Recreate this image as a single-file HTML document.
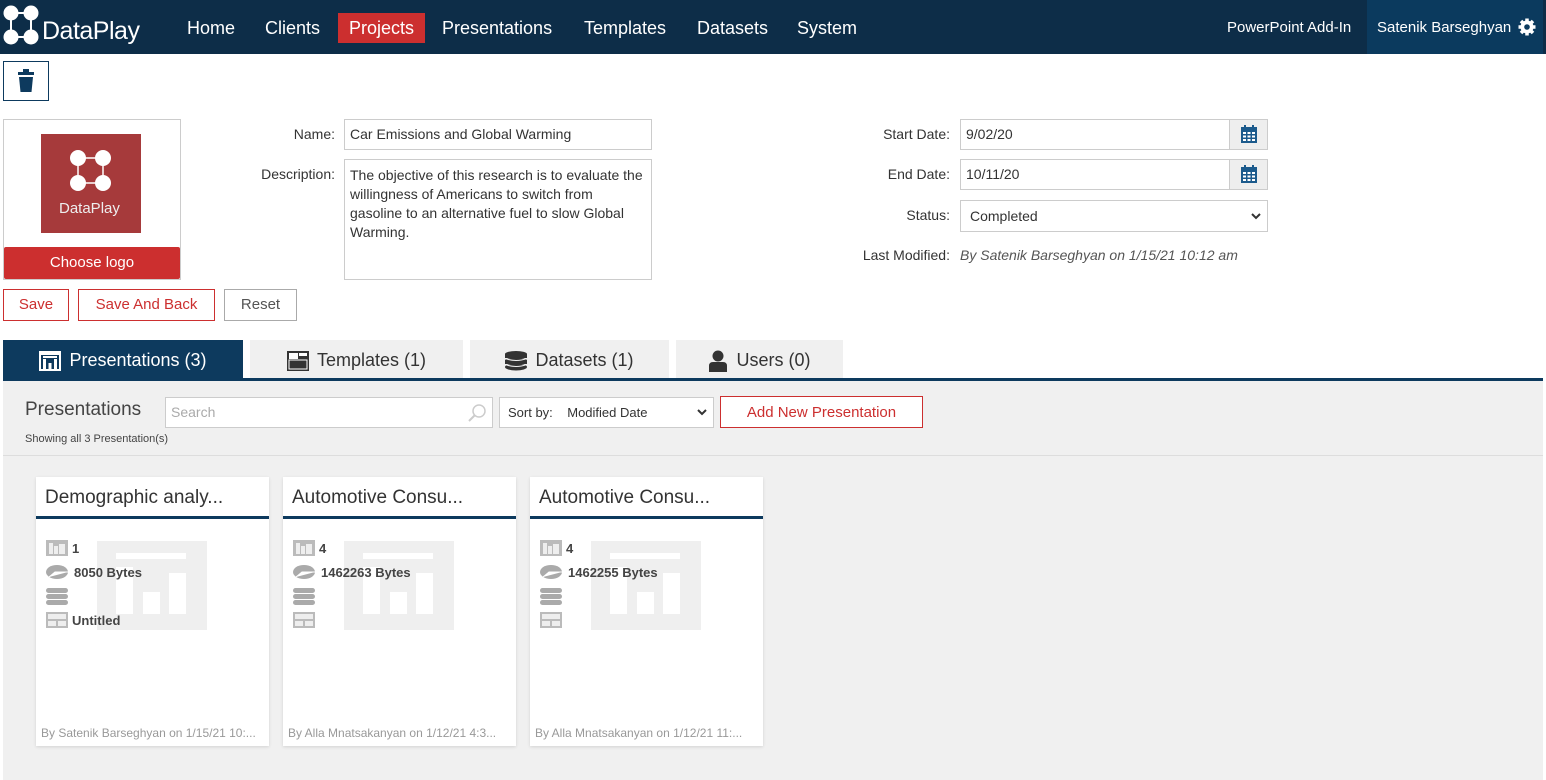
<!DOCTYPE html>
<html><head><meta charset="utf-8"><style>
*{box-sizing:border-box;margin:0;padding:0}
body{width:1546px;height:780px;overflow:hidden;background:#fff;font-family:"Liberation Sans",Arial,sans-serif;color:#333;position:relative}
.a{position:absolute;white-space:nowrap}
.nav{left:0;top:0;width:1546px;height:54px;background:#0d2d48}
.nl{color:#fff;font-size:18px;top:18px}
.lbl{font-size:14px;color:#333;text-align:right}
.inp{border:1px solid #ccc;background:#fff;font-size:14px;color:#333;padding:0 5px}
.btn{border:1px solid #cc2f2f;color:#cc2f2f;font-size:15px;text-align:center;line-height:30px;background:#fff}
.tab{top:340px;height:38px;background:#f0f0f0;font-size:18px;color:#333;display:flex;align-items:center;justify-content:center;gap:8px;padding-top:3px}
.card{top:477px;width:233px;height:269px;background:#fff;box-shadow:0 1px 3px rgba(0,0,0,.12)}
.ct{left:9px;top:10px;font-size:19px;color:#333}
.cl{left:0;top:39px;width:233px;height:3px;background:#0d3a5e}
.ci{font-size:13px;font-weight:bold;color:#444}
.cf{left:5px;top:249px;font-size:12px;color:#999}
</style></head><body>
<div class="a nav"></div>
<svg class="a" style="left:2px;top:4px" width="46" height="42" viewBox="0 0 46 42"><g fill="#fff"><circle cx="9" cy="9" r="7.5"/><circle cx="29" cy="9" r="7.5"/><circle cx="9" cy="33" r="7.5"/><circle cx="29" cy="33" r="7.5"/></g><g stroke="#fff" stroke-width="2"><line x1="9" y1="9" x2="29" y2="9"/><line x1="9" y1="9" x2="9" y2="33"/><line x1="29" y1="9" x2="29" y2="33"/><line x1="9" y1="33" x2="29" y2="33"/></g></svg>
<div class="a" style="left:42px;top:17px;color:#fff;font-size:25px;letter-spacing:-0.5px">DataPlay</div>
<div class="a nl" style="left:187px">Home</div>
<div class="a nl" style="left:265px">Clients</div>
<div class="a" style="left:338px;top:13px;width:87px;height:30px;background:#cc2f2f"></div>
<div class="a nl" style="left:349px">Projects</div>
<div class="a nl" style="left:442px">Presentations</div>
<div class="a nl" style="left:584px">Templates</div>
<div class="a nl" style="left:697px">Datasets</div>
<div class="a nl" style="left:797px">System</div>
<div class="a" style="left:1227px;top:19px;color:#fff;font-size:15px">PowerPoint Add-In</div>
<div class="a" style="left:1367px;top:0;width:176px;height:54px;background:#0b3a5e"></div>
<div class="a" style="left:1377px;top:19px;color:#fff;font-size:15px">Satenik Barseghyan</div>
<svg class="a" style="left:1518px;top:18px" width="18" height="18" viewBox="0 0 18 18"><g fill="#fff"><circle cx="9" cy="9" r="6.5"/><g stroke="#fff" stroke-width="3.5"><line x1="9" y1="0.5" x2="9" y2="17.5"/><line x1="0.5" y1="9" x2="17.5" y2="9"/><line x1="3" y1="3" x2="15" y2="15"/><line x1="15" y1="3" x2="3" y2="15"/></g></g><circle cx="9" cy="9" r="2.8" fill="#0b3a5e"/></svg>

<div class="a" style="left:3px;top:61px;width:46px;height:40px;border:1px solid #0d3a5e"></div>
<svg class="a" style="left:17px;top:69px" width="18" height="24" viewBox="0 0 18 24"><rect x="6" y="0" width="6" height="3" fill="#0d3a5e"/><rect x="1" y="3" width="16" height="3" fill="#0d3a5e"/><path d="M2 8h14l-1.5 15h-11z" fill="#0d3a5e"/></svg>

<div class="a" style="left:3px;top:119px;width:178px;height:161px;border:1px solid #ccc"></div>
<div class="a" style="left:41px;top:134px;width:100px;height:99px;background:#a63a3b"></div>
<svg class="a" style="left:68px;top:148px" width="46" height="46" viewBox="0 0 46 46"><g fill="#fff"><circle cx="10" cy="10" r="8"/><circle cx="35" cy="10" r="8"/><circle cx="10" cy="35" r="8"/><circle cx="35" cy="35" r="8"/></g><g stroke="#fff" stroke-width="1.5"><rect x="10" y="10" width="25" height="25" fill="none"/></g></svg>
<div class="a" style="left:59px;top:200px;color:#eee;font-size:15px">DataPlay</div>
<div class="a" style="left:4px;top:247px;width:176px;height:32px;background:#cc2f2f;color:#fff;font-size:15px;text-align:center;line-height:32px;border-radius:2px">Choose logo</div>

<div class="a lbl" style="left:200px;width:135px;top:126px">Name:</div>
<div class="a inp" style="left:344px;top:119px;width:308px;height:31px;line-height:29px">Car Emissions and Global Warming</div>
<div class="a lbl" style="left:200px;width:135px;top:166px">Description:</div>
<div class="a inp" style="left:344px;top:159px;width:308px;height:121px;padding-top:6px;line-height:19px;white-space:normal">The objective of this research is to evaluate the willingness of Americans to switch from gasoline to an alternative fuel to slow Global Warming.</div>

<div class="a lbl" style="left:800px;width:150px;top:126px">Start Date:</div>
<div class="a inp" style="left:960px;top:119px;width:308px;height:31px;line-height:29px">9/02/20</div>
<div class="a lbl" style="left:800px;width:150px;top:166px">End Date:</div>
<div class="a inp" style="left:960px;top:159px;width:308px;height:31px;line-height:29px">10/11/20</div>
<div class="a" style="left:1229px;top:120px;width:38px;height:29px;background:#eee;border-left:1px solid #ccc"></div>
<div class="a" style="left:1229px;top:160px;width:38px;height:29px;background:#eee;border-left:1px solid #ccc"></div>
<svg class="a" style="left:1241px;top:125px" width="16" height="18" viewBox="0 0 16 18"><rect x="0" y="2" width="16" height="16" fill="#1b5a8c"/><rect x="3" y="0" width="2" height="4" fill="#1b5a8c"/><rect x="11" y="0" width="2" height="4" fill="#1b5a8c"/><g fill="#fff"><rect x="2" y="7" width="3" height="2"/><rect x="6.5" y="7" width="3" height="2"/><rect x="11" y="7" width="3" height="2"/><rect x="2" y="10.5" width="3" height="2"/><rect x="6.5" y="10.5" width="3" height="2"/><rect x="11" y="10.5" width="3" height="2"/><rect x="2" y="14" width="3" height="2"/><rect x="6.5" y="14" width="3" height="2"/><rect x="11" y="14" width="3" height="2"/></g></svg>
<svg class="a" style="left:1241px;top:165px" width="16" height="18" viewBox="0 0 16 18"><rect x="0" y="2" width="16" height="16" fill="#1b5a8c"/><rect x="3" y="0" width="2" height="4" fill="#1b5a8c"/><rect x="11" y="0" width="2" height="4" fill="#1b5a8c"/><g fill="#fff"><rect x="2" y="7" width="3" height="2"/><rect x="6.5" y="7" width="3" height="2"/><rect x="11" y="7" width="3" height="2"/><rect x="2" y="10.5" width="3" height="2"/><rect x="6.5" y="10.5" width="3" height="2"/><rect x="11" y="10.5" width="3" height="2"/><rect x="2" y="14" width="3" height="2"/><rect x="6.5" y="14" width="3" height="2"/><rect x="11" y="14" width="3" height="2"/></g></svg>
<div class="a lbl" style="left:800px;width:150px;top:207px">Status:</div>
<div class="a inp" style="left:960px;top:200px;width:308px;height:32px;line-height:30px;padding-left:9px">Completed</div>
<svg class="a" style="left:1251px;top:212px" width="10" height="8" viewBox="0 0 10 8"><path d="M1 2l4 4 4-4" stroke="#333" stroke-width="2" fill="none"/></svg>
<div class="a lbl" style="left:800px;width:150px;top:247px">Last Modified:</div>
<div class="a" style="left:960px;top:247px;font-size:14px;font-style:italic;color:#555">By Satenik Barseghyan on 1/15/21 10:12 am</div>

<div class="a btn" style="left:3px;top:289px;width:66px;height:32px">Save</div>
<div class="a btn" style="left:78px;top:289px;width:137px;height:32px">Save And Back</div>
<div class="a btn" style="left:224px;top:289px;width:73px;height:32px;border-color:#aaa;color:#555">Reset</div>

<div class="a tab" style="left:3px;width:240px;background:#0d3a5e;color:#fff"><svg width="22" height="20" viewBox="0 0 22 20"><rect x="0" y="0" width="22" height="20" fill="#fff"/><rect x="2" y="4" width="18" height="14" fill="#0d3a5e"/><rect x="4" y="8" width="3" height="10" fill="#fff"/><rect x="9.5" y="12" width="3" height="6" fill="#fff"/><rect x="15" y="8" width="3" height="10" fill="#fff"/><rect x="4" y="5" width="14" height="2" fill="#fff"/></svg>Presentations (3)</div>
<div class="a tab" style="left:250px;width:213px"><svg width="22" height="20" viewBox="0 0 22 20"><rect x="0" y="0" width="22" height="20" fill="#333"/><rect x="2" y="2" width="9" height="6" fill="#fff"/><rect x="12" y="2" width="8" height="3" fill="#fff"/><rect x="2" y="9" width="18" height="9" fill="#333" stroke="#fff" stroke-width="1"/></svg>Templates (1)</div>
<div class="a tab" style="left:470px;width:199px"><svg width="22" height="20" viewBox="0 0 22 20"><g fill="#333"><ellipse cx="11" cy="3" rx="11" ry="3"/><rect x="0" y="3" width="22" height="4"/><ellipse cx="11" cy="9.5" rx="11" ry="3"/><rect x="0" y="9" width="22" height="4"/><ellipse cx="11" cy="16" rx="11" ry="3.5"/></g><g stroke="#f0f0f0" stroke-width="1" fill="none"><path d="M0 7.5q11 4 22 0M0 13.5q11 4 22 0"/></g></svg>Datasets (1)</div>
<div class="a tab" style="left:676px;width:167px"><svg width="20" height="22" viewBox="0 0 20 22"><circle cx="10" cy="6" r="5.5" fill="#333"/><path d="M1 22v-6q0-4 4-4h10q4 0 4 4v6z" fill="#333"/></svg>Users (0)</div>
<div class="a" style="left:3px;top:378px;width:1540px;height:3px;background:#0d3a5e"></div>
<div class="a" style="left:3px;top:381px;width:1540px;height:399px;background:#f0f0f0"></div>
<div class="a" style="left:25px;top:399px;font-size:19px;color:#444">Presentations</div>
<div class="a" style="left:25px;top:433px;font-size:11px;color:#444">Showing all 3 Presentation(s)</div>
<div class="a inp" style="left:165px;top:397px;width:328px;height:31px;line-height:29px;color:#aaa">Search</div>
<svg class="a" style="left:467px;top:403px" width="20" height="20" viewBox="0 0 20 20"><circle cx="12" cy="8" r="6" stroke="#ccc" stroke-width="1.5" fill="none"/><line x1="8" y1="12" x2="2" y2="18" stroke="#ccc" stroke-width="2"/></svg>
<div class="a inp" style="left:499px;top:397px;width:215px;height:31px;line-height:29px;font-size:13px;padding-left:8px">Sort by:&nbsp;&nbsp;&nbsp; Modified Date</div>
<svg class="a" style="left:697px;top:408px" width="10" height="8" viewBox="0 0 10 8"><path d="M1 2l4 4 4-4" stroke="#333" stroke-width="2" fill="none"/></svg>
<div class="a btn" style="left:720px;top:396px;width:203px;height:32px;line-height:31px">Add New Presentation</div>
<div class="a" style="left:3px;top:455px;width:1540px;height:1px;background:#ddd"></div>

<div class="a card" style="left:36px"><div class="a ct">Demographic analy...</div><div class="a cl"></div>
<div class="a" style="left:61px;top:64px;width:110px;height:89px;background:#efefef"></div>
<div class="a" style="left:80px;top:76px;width:70px;height:6px;background:#fff"></div><div class="a" style="left:80px;top:90px;width:17px;height:47px;background:#fff"></div><div class="a" style="left:107px;top:115px;width:17px;height:22px;background:#fff"></div><div class="a" style="left:133px;top:96px;width:17px;height:41px;background:#fff"></div>
<svg class="a" style="left:10px;top:63px" width="22" height="88" viewBox="0 0 22 88"><g fill="#aaa"><rect x="0" y="0" width="22" height="16" fill="#bbb"/><rect x="3" y="3" width="4" height="11" fill="#eee"/><rect x="8" y="6" width="4" height="8" fill="#eee"/><rect x="13" y="4" width="6" height="10" fill="#eee"/><ellipse cx="11" cy="32" rx="11" ry="7"/><path d="M3 37l6-5h13" stroke="#fff" stroke-width="1" fill="#fff"/><rect x="0" y="48" width="22" height="5" rx="2.5"/><rect x="0" y="54" width="22" height="5" rx="2.5"/><rect x="0" y="60" width="22" height="5" rx="2.5"/><rect x="0" y="72" width="22" height="16" fill="#bbb"/><rect x="2" y="74" width="18" height="5" fill="#eee"/><rect x="2" y="81" width="8" height="5" fill="#eee"/><rect x="12" y="81" width="8" height="5" fill="#eee"/></g></svg>
<div class="a ci" style="left:36px;top:64px">1</div><div class="a ci" style="left:38px;top:88px">8050 Bytes</div><div class="a ci" style="left:36px;top:136px">Untitled</div>
<div class="a cf">By Satenik Barseghyan on 1/15/21 10:...</div></div>

<div class="a card" style="left:283px"><div class="a ct">Automotive Consu...</div><div class="a cl"></div>
<div class="a" style="left:61px;top:64px;width:110px;height:89px;background:#efefef"></div>
<div class="a" style="left:80px;top:76px;width:70px;height:6px;background:#fff"></div><div class="a" style="left:80px;top:90px;width:17px;height:47px;background:#fff"></div><div class="a" style="left:107px;top:115px;width:17px;height:22px;background:#fff"></div><div class="a" style="left:133px;top:96px;width:17px;height:41px;background:#fff"></div>
<svg class="a" style="left:10px;top:63px" width="22" height="88" viewBox="0 0 22 88"><g fill="#aaa"><rect x="0" y="0" width="22" height="16" fill="#bbb"/><rect x="3" y="3" width="4" height="11" fill="#eee"/><rect x="8" y="6" width="4" height="8" fill="#eee"/><rect x="13" y="4" width="6" height="10" fill="#eee"/><ellipse cx="11" cy="32" rx="11" ry="7"/><path d="M3 37l6-5h13" stroke="#fff" stroke-width="1" fill="#fff"/><rect x="0" y="48" width="22" height="5" rx="2.5"/><rect x="0" y="54" width="22" height="5" rx="2.5"/><rect x="0" y="60" width="22" height="5" rx="2.5"/><rect x="0" y="72" width="22" height="16" fill="#bbb"/><rect x="2" y="74" width="18" height="5" fill="#eee"/><rect x="2" y="81" width="8" height="5" fill="#eee"/><rect x="12" y="81" width="8" height="5" fill="#eee"/></g></svg>
<div class="a ci" style="left:36px;top:64px">4</div><div class="a ci" style="left:38px;top:88px">1462263 Bytes</div>
<div class="a cf">By Alla Mnatsakanyan on 1/12/21 4:3...</div></div>

<div class="a card" style="left:530px"><div class="a ct">Automotive Consu...</div><div class="a cl"></div>
<div class="a" style="left:61px;top:64px;width:110px;height:89px;background:#efefef"></div>
<div class="a" style="left:80px;top:76px;width:70px;height:6px;background:#fff"></div><div class="a" style="left:80px;top:90px;width:17px;height:47px;background:#fff"></div><div class="a" style="left:107px;top:115px;width:17px;height:22px;background:#fff"></div><div class="a" style="left:133px;top:96px;width:17px;height:41px;background:#fff"></div>
<svg class="a" style="left:10px;top:63px" width="22" height="88" viewBox="0 0 22 88"><g fill="#aaa"><rect x="0" y="0" width="22" height="16" fill="#bbb"/><rect x="3" y="3" width="4" height="11" fill="#eee"/><rect x="8" y="6" width="4" height="8" fill="#eee"/><rect x="13" y="4" width="6" height="10" fill="#eee"/><ellipse cx="11" cy="32" rx="11" ry="7"/><path d="M3 37l6-5h13" stroke="#fff" stroke-width="1" fill="#fff"/><rect x="0" y="48" width="22" height="5" rx="2.5"/><rect x="0" y="54" width="22" height="5" rx="2.5"/><rect x="0" y="60" width="22" height="5" rx="2.5"/><rect x="0" y="72" width="22" height="16" fill="#bbb"/><rect x="2" y="74" width="18" height="5" fill="#eee"/><rect x="2" y="81" width="8" height="5" fill="#eee"/><rect x="12" y="81" width="8" height="5" fill="#eee"/></g></svg>
<div class="a ci" style="left:36px;top:64px">4</div><div class="a ci" style="left:38px;top:88px">1462255 Bytes</div>
<div class="a cf">By Alla Mnatsakanyan on 1/12/21 11:...</div></div>
</body></html>
